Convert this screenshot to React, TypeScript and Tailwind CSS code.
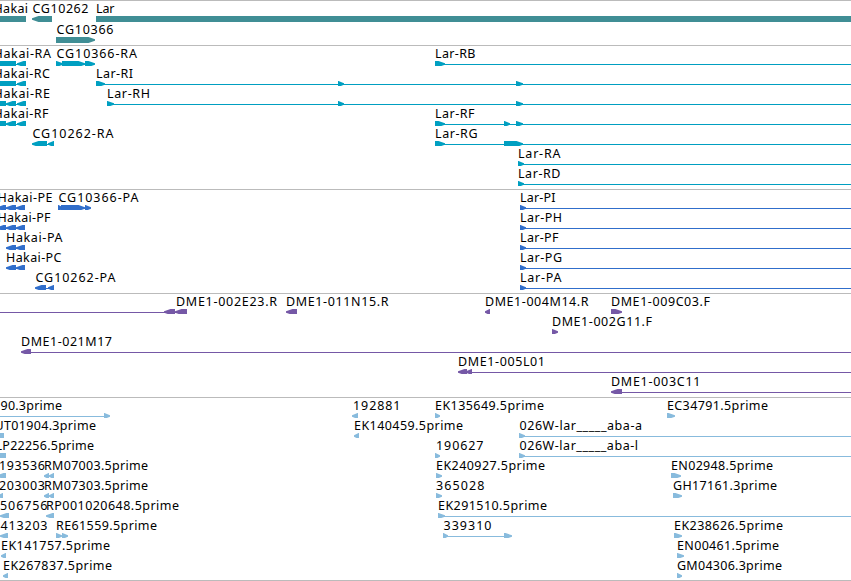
import React from 'react';

// [text, start x, end x]
type Label = [string, number, number];
// kind, start x, end x: r = right arrow, l = left arrow, b = block, i = intron line
type Shape = ['r' | 'l' | 'b' | 'i', number, number];
type Row = { labels: Label[]; shapes: Shape[] };
type Track = { name: string; tone: string; rowClass: string; padClass: string; rows: Row[] };

const W = 851;

const tracks: Track[] = [
  {
    name: 'genes',
    tone: 'text-[#408e95]',
    rowClass: 'h-[21px]',
    padClass: 'pb-[2px]',
    rows: [
      {
        labels: [['Hakai', -7, 28], ['CG10262', 32, 88.5], ['Lar', 95.5, 114.5]],
        shapes: [['b', 0, 26], ['l', 32, 52], ['b', 96, W]],
      },
      { labels: [['CG10366', 56, 113.5]], shapes: [['r', 56, 95]] },
    ],
  },
  {
    name: 'transcripts',
    tone: 'text-[#009fc1]',
    rowClass: 'h-5',
    padClass: 'pb-[3px]',
    rows: [
      {
        labels: [['Hakai-RA', -7, 51], ['CG10366-RA', 56, 137], ['Lar-RB', 434.5, 475.5]],
        shapes: [['b', 0, 16], ['i', 16, 18], ['l', 17, 26], ['r', 56, 63], ['r', 62, 85], ['i', 83, 86], ['r', 85, 95], ['r', 435, 445], ['i', 440, W]],
      },
      {
        labels: [['Hakai-RC', -7, 50], ['Lar-RI', 95.5, 133]],
        shapes: [['b', 0, 16], ['i', 16, 18], ['l', 17, 26], ['r', 96, 105], ['i', 100, W], ['r', 338, 344], ['r', 516, 523]],
      },
      {
        labels: [['Hakai-RE', -7, 50], ['Lar-RH', 106.5, 150]],
        shapes: [['b', 0, 6], ['i', 5, 20], ['l', 6, 16], ['l', 17, 26], ['r', 107, 114], ['i', 108, W], ['r', 338, 344], ['r', 516, 523]],
      },
      {
        labels: [['Hakai-RF', -7, 48.5], ['Lar-RF', 434.5, 474.5]],
        shapes: [['b', 0, 6], ['i', 5, 20], ['l', 6, 16], ['l', 17, 26], ['r', 435, 445], ['i', 440, W], ['r', 504, 510], ['r', 516, 523]],
      },
      {
        labels: [['CG10262-RA', 32, 113.5], ['Lar-RG', 434.5, 477.5]],
        shapes: [['l', 32, 47], ['i', 46, 50], ['l', 48, 54], ['r', 435, 445], ['i', 440, W], ['r', 504, 523]],
      },
      { labels: [['Lar-RA', 517.5, 560.5]], shapes: [['r', 518, 524], ['i', 520, W]] },
      { labels: [['Lar-RD', 517.5, 560.5]], shapes: [['r', 518, 524], ['i', 520, W]] },
    ],
  },
  {
    name: 'proteins',
    tone: 'text-[#306ecb]',
    rowClass: 'h-5',
    padClass: 'pb-[3px]',
    rows: [
      {
        labels: [['Hakai-PE', -3, 52.5], ['CG10366-PA', 58, 138.5], ['Lar-PI', 519.5, 555.5]],
        shapes: [['l', -3, 6], ['i', 4, 20], ['l', 6, 16], ['l', 16, 25], ['r', 58, 63], ['r', 61, 85], ['i', 82, 86], ['r', 85, 91], ['r', 520, 526], ['i', 522, W]],
      },
      {
        labels: [['Hakai-PF', -3, 50.5], ['Lar-PH', 519.5, 562]],
        shapes: [['l', -3, 6], ['i', 4, 20], ['l', 6, 16], ['l', 16, 25], ['r', 520, 526], ['i', 522, W]],
      },
      {
        labels: [['Hakai-PA', 5.5, 62.5], ['Lar-PF', 519.5, 558.5]],
        shapes: [['l', 6, 16], ['i', 15, 20], ['l', 16, 25], ['r', 520, 526], ['i', 522, W]],
      },
      {
        labels: [['Hakai-PC', 5.5, 61.5], ['Lar-PG', 519.5, 562]],
        shapes: [['l', 6, 16], ['i', 15, 20], ['l', 16, 25], ['r', 520, 526], ['i', 522, W]],
      },
      {
        labels: [['CG10262-PA', 35, 115.5], ['Lar-PA', 519.5, 561.5]],
        shapes: [['l', 35, 46], ['i', 45, 50], ['l', 48, 54], ['r', 520, 526], ['i', 522, W]],
      },
    ],
  },
  {
    name: 'bac clones',
    tone: 'text-[#7558a6]',
    rowClass: 'h-5',
    padClass: 'pb-[3px]',
    rows: [
      {
        labels: [['DME1-002E23.R', 175.5, 277], ['DME1-011N15.R', 285.5, 388.5], ['DME1-004M14.R', 484.5, 588.5], ['DME1-009C03.F', 610.5, 710]],
        shapes: [['i', 0, 178], ['l', 164, 175], ['l', 175, 187], ['l', 286, 297], ['l', 485, 490], ['r', 611, 622]],
      },
      { labels: [['DME1-002G11.F', 551.5, 652]], shapes: [['r', 552, 558]] },
      { labels: [['DME1-021M17', 20.5, 112]], shapes: [['l', 21, 31], ['i', 30, W]] },
      { labels: [['DME1-005L01', 457.5, 545]], shapes: [['l', 458, 467], ['l', 466, 472], ['i', 470, W]] },
      { labels: [['DME1-003C11', 610.5, 700.5]], shapes: [['l', 611, 622], ['i', 621, W]] },
    ],
  },
  {
    name: 'ests',
    tone: 'text-[#88bbdd]',
    rowClass: 'h-5',
    padClass: 'pb-[2px]',
    rows: [
      {
        labels: [['90.3prime', 0, 62], ['192881', 352.5, 400.5], ['EK135649.5prime', 434.5, 544], ['EC34791.5prime', 666.5, 768]],
        shapes: [['i', 0, 106], ['r', 104, 110], ['l', 352, 358], ['r', 435, 440], ['r', 667, 675]],
      },
      {
        labels: [['UT01904.3prime', -6, 96], ['EK140459.5prime', 353.5, 463], ['026W-lar_____aba-a', 519, 642]],
        shapes: [['b', 0, 4], ['l', 354, 359], ['r', 519, 525], ['i', 521, W]],
      },
      {
        labels: [['LP22256.5prime', -5, 94], ['190627', 435.5, 483.5], ['026W-lar_____aba-l', 519, 638]],
        shapes: [['b', 0, 6], ['r', 435, 440], ['r', 519, 525], ['i', 521, W]],
      },
      {
        labels: [['193536', -1.5, 45], ['RM07003.5prime', 43.5, 148], ['EK240927.5prime', 435.5, 545], ['EN02948.5prime', 670.5, 773]],
        shapes: [['l', -3, 6], ['l', 44, 49], ['l', 49, 54], ['r', 436, 442], ['r', 671, 681]],
      },
      {
        labels: [['203003', -1.5, 45], ['RM07303.5prime', 43.5, 148], ['365028', 435.5, 484.5], ['GH17161.3prime', 672.5, 777]],
        shapes: [['l', -2, 3], ['l', 44, 49], ['l', 49, 54], ['r', 436, 442], ['r', 673, 682]],
      },
      {
        labels: [['506756', -0.5, 47.5], ['RP001020648.5prime', 45.5, 179], ['EK291510.5prime', 437.5, 547]],
        shapes: [['l', 0, 9], ['l', 46, 54], ['r', 438, 445], ['i', 440, W]],
      },
      {
        labels: [['413203', 0, 47.5], ['RE61559.5prime', 55.5, 157], ['339310', 443, 491.5], ['EK238626.5prime', 673.5, 783]],
        shapes: [['l', 0, 8], ['r', 56, 62], ['r', 62, 68], ['r', 443, 448], ['i', 445, 505], ['r', 504, 512], ['r', 674, 682]],
      },
      {
        labels: [['EK141757.5prime', 0.5, 110], ['EN00461.5prime', 676.5, 779]],
        shapes: [['l', 1, 6], ['r', 677, 684]],
      },
      {
        labels: [['EK267837.5prime', 2.5, 112], ['GM04306.3prime', 676.5, 782]],
        shapes: [['l', 3, 8], ['r', 677, 682]],
      },
    ],
  },
];

function Glyph({ shape: [kind, a, b] }: { shape: Shape }) {
  if (kind === 'b') return <rect x={a} y={15} width={b - a} height={6} />;
  if (kind === 'i') return <rect x={a} y={18} width={b - a} height={1} />;
  const head = Math.min(b - a, 7);
  const points =
    kind === 'r'
      ? `${a},15 ${b - head + 0.5},15 ${b},17.3 ${b},18.7 ${b - head + 0.5},21 ${a},21`
      : `${b},15 ${a + head - 0.5},15 ${a},17.3 ${a},18.7 ${a + head - 0.5},21 ${b},21`;
  return <polygon points={points} />;
}

function FeatureRow({ row, className }: { row: Row; className: string }) {
  return (
    <svg className={`block w-full shrink-0 ${className}`} fill="currentColor">
      {row.shapes.map((s, i) => (
        <Glyph key={i} shape={s} />
      ))}
      {row.labels.map(([text, x, end]) => (
        <text key={text} x={x + 0.5} y={12} textLength={end - x - 0.5} className="fill-black text-[12.5px]">
          {text}
        </text>
      ))}
    </svg>
  );
}

export default function App() {
  return (
    <main className="flex h-[581px] w-[851px] flex-col overflow-hidden border-b border-[#bbbbbb] bg-white font-['Noto_Sans','DejaVu_Sans',sans-serif]">
      {tracks.map((t) => (
        <section key={t.name} className={`flex flex-col border-t border-[#bbbbbb] ${t.tone} ${t.padClass}`}>
          {t.rows.map((row, i) => (
            <FeatureRow key={i} row={row} className={t.rowClass} />
          ))}
        </section>
      ))}
    </main>
  );
}
